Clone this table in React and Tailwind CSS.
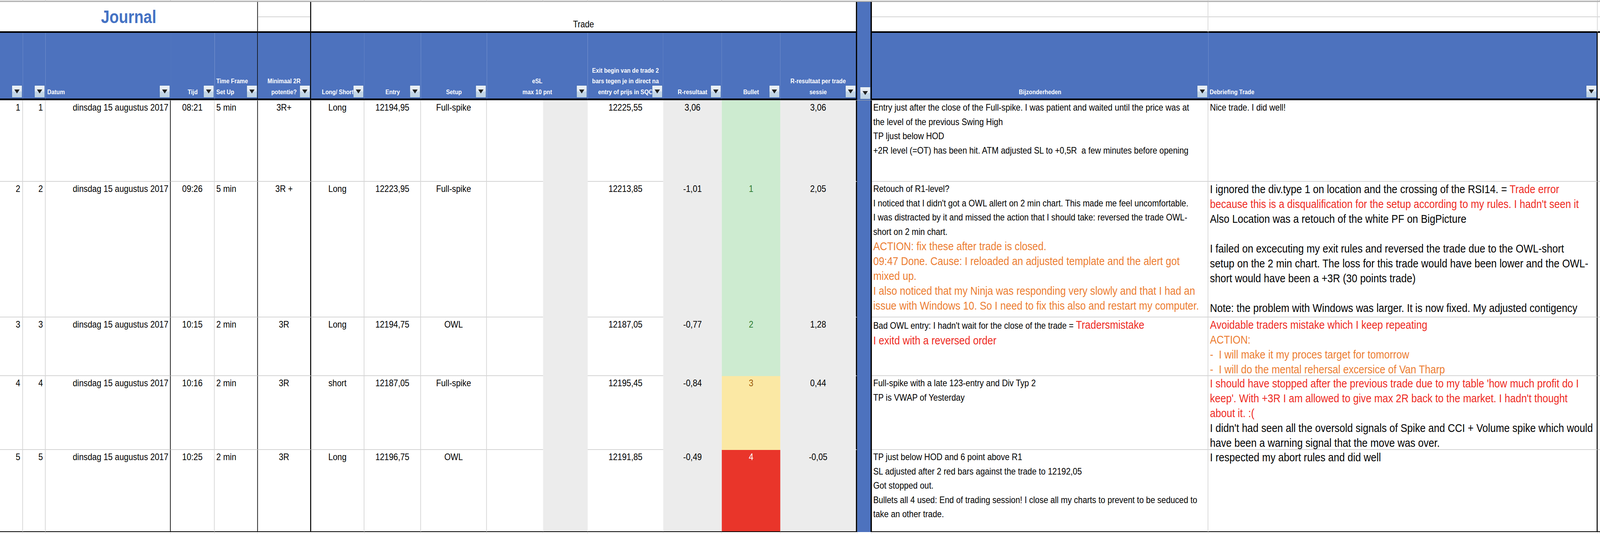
import React, { useState } from "react";

const COLS =
  "grid grid-cols-[69px_68px_376px_132px_130px_160px_160px_170px_198px_169px_134px_227px_176px_176px_231px_44px_1011px_1170px_7px]";

const GREEN = { bg: "bg-[#cdebd0]", bb: "border-b-[#cdebd0]", tc: "text-[#2e7b31]" };
const YELLOW = { bg: "bg-[#fbe8a4]", bb: "border-b-[#fbe8a4]", tc: "text-[#9c5a0a]" };
const RED = { bg: "bg-[#e9352a]", bb: "border-b-[#e9352a]", tc: "text-white" };

// text segments: small black, big black, big orange, big red
const s = (t) => ({ t });
const b = (t) => ({ t, big: true });
const o = (t) => ({ t, big: true, c: "text-[#ec7d31]" });
const rd = (t) => ({ t, big: true, c: "text-[#ee2a22]" });
const blank = [b("\u00a0")];

const ROWS = [
  {
    n: 1, h: "h-[208px]", tijd: "08:21", tf: "5 min", min: "3R+", ls: "Long", entry: "12194,95",
    setup: "Full-spike", exit: "12225,55", r: "3,06", bullet: "", bc: GREEN, rs: "3,06",
    bijz: [
      [s("Entry just after the close of the Full-spike. I was patient and waited until the price was at")],
      [s("the level of the previous Swing High")],
      [s("TP ljust below HOD")],
      [s("+2R level (=OT) has been hit. ATM adjusted SL to +0,5R  a few minutes before opening")],
    ],
    deb: [[s("Nice trade. I did well!")]],
  },
  {
    n: 2, h: "h-[347px]", tijd: "09:26", tf: "5 min", min: "3R +", ls: "Long", entry: "12223,95",
    setup: "Full-spike", exit: "12213,85", r: "-1,01", bullet: "1", bc: GREEN, rs: "2,05",
    bijz: [
      [s("Retouch of R1-level?")],
      [s("I noticed that I didn't got a OWL allert on 2 min chart. This made me feel uncomfortable.")],
      [s("I was distracted by it and missed the action that I should take: reversed the trade OWL-")],
      [s("short on 2 min chart.")],
      [o("ACTION: fix these after trade is closed.")],
      [o("09:47 Done. Cause: I reloaded an adjusted template and the alert got")],
      [o("mixed up.")],
      [o("I also noticed that my Ninja was responding very slowly and that I had an")],
      [o("issue with Windows 10. So I need to fix this also and restart my computer.")],
    ],
    deb: [
      [b("I ignored the div.type 1 on location and the crossing of the RSI14. = "), rd("Trade error")],
      [rd("because this is a disqualification for the setup according to my rules. I hadn't seen it")],
      [b("Also Location was a retouch of the white PF on BigPicture")],
      blank,
      [b("I failed on excecuting my exit rules and reversed the trade due to the OWL-short")],
      [b("setup on the 2 min chart. The loss for this trade would have been lower and the OWL-")],
      [b("short would have been a +3R (30 points trade)")],
      blank,
      [b("Note: the problem with Windows was larger. It is now fixed. My adjusted contigency")],
    ],
  },
  {
    n: 3, h: "h-[150px]", tijd: "10:15", tf: "2 min", min: "3R", ls: "Long", entry: "12194,75",
    setup: "OWL", exit: "12187,05", r: "-0,77", bullet: "2", bc: GREEN, rs: "1,28",
    bijz: [
      [s("Bad OWL entry: I hadn't wait for the close of the trade = "), rd("Tradersmistake")],
      [rd("I exitd with a reversed order")],
    ],
    deb: [
      [rd("Avoidable traders mistake which I keep repeating")],
      [o("ACTION:")],
      [o("-  I will make it my proces target for tomorrow")],
      [o("-  I will do the mental rehersal excersice of Van Tharp")],
    ],
  },
  {
    n: 4, h: "h-[189px]", tijd: "10:16", tf: "2 min", min: "3R", ls: "short", entry: "12187,05",
    setup: "Full-spike", exit: "12195,45", r: "-0,84", bullet: "3", bc: YELLOW, rs: "0,44",
    bijz: [
      [s("Full-spike with a late 123-entry and Div Typ 2")],
      [s("TP is VWAP of Yesterday")],
    ],
    deb: [
      [rd("I should have stopped after the previous trade due to my table 'how much profit do I")],
      [rd("keep'. With +3R I am allowed to give max 2R back to the market. I hadn't thought")],
      [rd("about it. :(")],
      [b("I didn't had seen all the oversold signals of Spike and CCI + Volume spike which would")],
      [b("have been a warning signal that the move was over.")],
    ],
  },
  {
    n: 5, h: "h-[210px]", tijd: "10:25", tf: "2 min", min: "3R", ls: "Long", entry: "12196,75",
    setup: "OWL", exit: "12191,85", r: "-0,49", bullet: "4", bc: RED, rs: "-0,05",
    bijz: [
      [s("TP just below HOD and 6 point above R1")],
      [s("SL adjusted after 2 red bars against the trade to 12192,05")],
      [s("Got stopped out.")],
      [s("Bullets all 4 used: End of trading session! I close all my charts to prevent to be seduced to")],
      [s("take an other trade.")],
    ],
    deb: [[b("I respected my abort rules and did well")]],
  },
];

function Filter({ flush }) {
  return (
    <span
      className={`absolute bottom-[2px] ${flush ? "right-0" : "right-[2px]"} flex h-[32px] w-[32px] items-start justify-center border border-[#3d66ad] bg-[linear-gradient(#eaf0f6_0%,#e2eaf3_46%,#c4d7e8_54%,#bfd3e5_100%)] pt-[10px]`}
    >
      <svg width="16" height="10" viewBox="0 0 16 10">
        <path d="M0 0H16L8 10Z" fill="#1f1f1f" />
      </svg>
    </span>
  );
}

function Head({ className = "", lines = [], flush, noBottom }) {
  return (
    <div
      className={`relative flex flex-col justify-end bg-[#4d72be] pb-[3px] text-[17px] font-bold leading-[27.5px] text-white ${noBottom ? "" : "border-b-4 border-b-black"} ${className}`}
    >
      {lines.map((l, i) => (
        <div key={i} className="whitespace-nowrap">
          {l}
        </div>
      ))}
      <Filter flush={flush} />
    </div>
  );
}

function Split({ className = "" }) {
  return (
    <div className={`border-b-4 border-b-black ${className}`}>
      <div className="h-[39px] border-b-2 border-b-[#d4d4d4]" />
    </div>
  );
}

function Lines({ lines }) {
  return lines.map((ln, i) => {
    const big = ln.some((seg) => seg.big);
    return (
      <div
        key={i}
        className={`whitespace-pre ${big ? "text-[30px] leading-[38px]" : "text-[24.5px] leading-[36.5px]"}`}
      >
        {ln.map((seg, j) => (
          <span key={j} className={`${!seg.big && big ? "text-[24.5px]" : ""} ${seg.c || ""}`}>
            {seg.t}
          </span>
        ))}
      </div>
    );
  });
}

function Row({ r, last }) {
  const bb = last ? "border-b-black" : "border-b-[#d4d4d4]";
  const t = `overflow-hidden whitespace-nowrap border-b-2 text-[24.5px] leading-[36.5px] ${bb}`;
  const grid = "border-r-2 border-r-[#d4d4d4]";
  const fill = `overflow-hidden whitespace-nowrap border-b-2 bg-[#ececec] text-center text-[24.5px] leading-[36.5px] ${last ? "border-b-black" : "border-b-[#ececec]"}`;
  return (
    <div className={`${COLS} ${r.h}`}>
      <div className={`${t} ${grid} pr-[6px] text-right`}>{r.n}</div>
      <div className={`${t} ${grid} pr-[6px] text-right`}>{r.n}</div>
      <div className={`${t} border-r-2 border-r-black pr-[5px] text-right`}>dinsdag 15 augustus 2017</div>
      <div className={`${t} ${grid} text-center`}>{r.tijd}</div>
      <div className={`${t} border-r-2 border-r-black pl-[5px]`}>{r.tf}</div>
      <div className={`${t} border-r-[3px] border-r-black text-center`}>{r.min}</div>
      <div className={`${t} ${grid} text-center`}>{r.ls}</div>
      <div className={`${t} ${grid} text-center`}>{r.entry}</div>
      <div className={`${t} ${grid} text-center`}>{r.setup}</div>
      <div className={t} />
      <div className={fill} />
      <div className={`${t} text-center`}>{r.exit}</div>
      <div className={fill}>{r.r}</div>
      <div
        className={`overflow-hidden border-b-2 text-center text-[24.5px] leading-[36.5px] ${r.bc.bg} ${r.bc.tc} ${last ? "border-b-black" : r.bc.bb}`}
      >
        {r.bullet}
      </div>
      <div className={`${fill} border-r-4 border-r-black`}>{r.rs}</div>
      <div className="border-r-4 border-r-black bg-[#4d72be]" />
      <div className={`overflow-hidden border-b-2 ${bb} ${grid} pl-[4px]`}>
        <Lines lines={r.bijz} />
      </div>
      <div className={`overflow-hidden border-b-2 ${bb} border-r-[3px] border-r-black pl-[5px]`}>
        <Lines lines={r.deb} />
      </div>
      <div className={`border-b-2 ${bb}`} />
    </div>
  );
}

export default function App() {
  const cells = Array.from({ length: 19 });
  // the sheet is drawn 4808px wide; squeeze it if the window is narrower
  const [sx] = useState(() => {
    const w = document.documentElement.clientWidth || window.innerWidth;
    return Math.min(1, w / 4808);
  });

  return (
    <div className="h-[1366px] w-full overflow-hidden bg-white">
      <div
        className="h-[1366px] w-[4808px] origin-top-left bg-white font-['Liberation_Sans',Arial,sans-serif] text-black"
        style={{ transform: `scaleX(${sx})` }}
      >
        {/* strip of the row above */}
        <div className={`${COLS} h-[5px]`}>
          {cells.map((_, i) => (
            <div key={i} className="border-r border-b-2 border-r-[#b8b8b8] border-b-[#a0a0a0] bg-[#e2e2e2]" />
          ))}
        </div>

        {/* title band */}
        <div className={`${COLS} h-[79px]`}>
          <div className="col-span-5 flex items-center justify-center border-r-2 border-b-4 border-black pt-[2px] text-[46px] font-bold text-[#4472c4]">
            Journal
          </div>
          <Split className="border-r-[3px] border-r-black" />
          <div className="col-span-9 flex items-end justify-center border-r-4 border-b-4 border-black text-[24.5px] leading-[36.5px]">
            Trade
          </div>
          <div className="border-r-4 border-r-black bg-[#4d72be]" />
          <Split className="border-r-2 border-r-[#d4d4d4]" />
          <Split className="border-r-2 border-r-[#d4d4d4]" />
          <Split />
        </div>

        {/* column headers */}
        <div className={`${COLS} h-[172px]`}>
          <Head />
          <Head />
          <Head className="pl-[5px] text-left" lines={["Datum"]} />
          <Head className="text-center" lines={["Tijd"]} />
          <Head className="border-r-2 border-r-black pl-[5px] text-left" lines={["Time Frame", "Set Up"]} flush />
          <Head className="border-r-[3px] border-r-black text-center" lines={["Minimaal 2R", "potentie?"]} flush />
          <Head className="text-center" lines={["Long/ Short"]} />
          <Head className="text-center" lines={["Entry"]} />
          <Head className="text-center" lines={["Setup"]} />
          <Head className="col-span-2 text-center" lines={["eSL", "max 10 pnt"]} />
          <Head
            className="text-center"
            lines={["Exit begin van de trade 2", "bars tegen je in direct na", "entry of prijs in SQC"]}
          />
          <Head className="text-center" lines={["R-resultaat"]} />
          <Head className="text-center" lines={["Bullet"]} />
          <Head className="border-r-4 border-r-black text-center" lines={["R-resultaat per trade", "sessie"]} flush />
          <Head className="border-r-4 border-r-black" flush noBottom />
          <Head className="text-center" lines={["Bijzonderheden"]} />
          <Head className="border-r-[3px] border-r-black pl-[4px] text-left" lines={["Debriefing Trade"]} flush />
          <div className="border-b-4 border-b-black" />
        </div>
        <div className="h-px bg-[#a6a6a6]" />

        {ROWS.map((r, i) => (
          <Row key={r.n} r={r} last={i === ROWS.length - 1} />
        ))}

        <div className={`${COLS} h-[5px]`}>
          {cells.map((_, i) => (
            <div key={i} className="border-r border-r-[#d4d4d4]" />
          ))}
        </div>
      </div>
    </div>
  );
}
